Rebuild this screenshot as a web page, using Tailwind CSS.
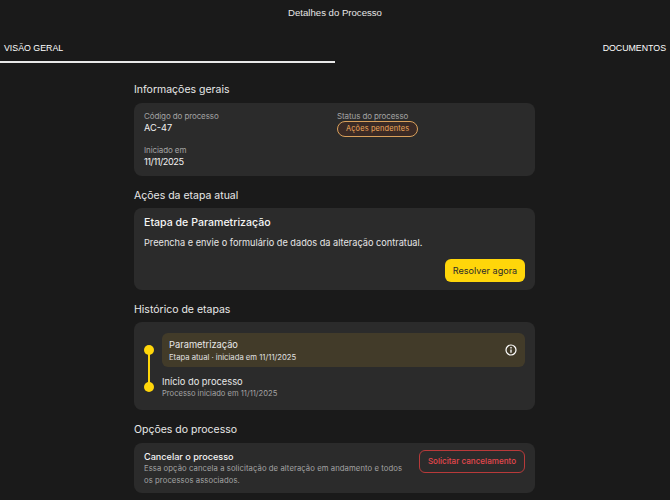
<!DOCTYPE html>
<html><head><meta charset="utf-8"><script src="https://cdn.jsdelivr.net/npm/@tailwindcss/browser@4"></script></head>
<body class="bg-[#1a1a1a] font-['Inter',sans-serif] text-white">
<div class="w-[670px] h-[500px] overflow-hidden">
<div class="h-[25px] pt-[5px] text-center text-[9.6px] leading-[15px] text-[#e6e6e6] font-['Liberation_Sans',sans-serif]">Detalhes do Processo</div>
<div class="flex h-[38px]">
<div class="w-[335px] h-[38px] border-b-2 border-[#e8e8e8] pl-[4px] pt-[16px] text-[8.8px] leading-[14px] font-['Liberation_Sans',sans-serif]">VISÃO GERAL</div>
<div class="w-[335px] pr-[4px] pt-[16px] text-right text-[8.8px] leading-[14px] font-['Liberation_Sans',sans-serif]">DOCUMENTOS</div>
</div>
<main class="w-[401px] ml-[134px]">
<h2 class="mt-[18px] text-[10.5px] leading-[17px] text-[#e8e8e8]">Informações gerais</h2>
<section class="mt-[5px] h-[73px] rounded-lg bg-[#2b2b2b] pl-[10px] pt-[8px] grid grid-cols-[193px_1fr] content-start">
<div><p class="text-[8px] leading-[10px] tracking-[-0.1px] text-[#a3a3a3]">Código do processo</p><p class="text-[9.2px] leading-[13px] text-[#f2f2f2]">AC-47</p></div>
<div class="flex flex-col items-start"><p class="text-[8px] leading-[10px] tracking-[-0.1px] text-[#a3a3a3]">Status do processo</p><span class="flex items-center h-[16px] px-[8px] rounded-full border border-[#d9a05b] bg-[#3a2a25] text-[7.4px] tracking-[0.15px] text-[#f0a95a]">Ações pendentes</span></div>
<div class="mt-[8px]"><p class="text-[8px] leading-[10px] tracking-[-0.1px] text-[#a3a3a3]">Iniciado em</p><p class="text-[9.2px] leading-[13px] tracking-[-0.45px] text-[#f2f2f2]">11/11/2025</p></div>
</section>
<h2 class="mt-[11px] text-[10.5px] leading-[17px] text-[#e8e8e8]">Ações da etapa atual</h2>
<section class="mt-[4px] h-[82px] rounded-lg bg-[#2b2b2b] px-[10px] pt-[7px]">
<h3 class="text-[10.6px] leading-[16px] font-medium text-[#f5f5f5]">Etapa de Parametrização</h3>
<p class="mt-[4px] text-[9.2px] leading-[15px] text-[#e6e6e6]">Preencha e envie o formulário de dados da alteração contratual.</p>
<div class="flex justify-end mt-[9px]"><button class="h-[23px] w-[80px] rounded-md bg-[#ffd60a] text-[#2b2b2b] text-[9.1px]">Resolver agora</button></div>
</section>
<h2 class="mt-[11px] text-[10.5px] leading-[17px] text-[#e8e8e8]">Histórico de etapas</h2>
<section class="relative mt-[4px] h-[88px] rounded-lg bg-[#2b2b2b] pl-[28px] pr-[10px] pt-[11px]">
<span class="absolute left-[10px] top-[23px] size-[10px] rounded-full bg-[#ffd60a]"></span>
<span class="absolute left-[14px] top-[28px] h-[38px] w-[2px] bg-[#ffd60a]"></span>
<span class="absolute left-[10px] top-[60px] size-[10px] rounded-full bg-[#ffd60a]"></span>
<div class="flex items-center justify-between h-[34px] rounded-md bg-[#423b29] px-[7px]">
<div><p class="text-[9.3px] leading-[14px] text-[#e8e8e8]">Parametrização</p><p class="text-[7.7px] leading-[11px] text-[#e0e0e0]">Etapa atual · iniciada em 11/11/2025</p></div>
<svg class="mr-[1px]" width="12" height="12" viewBox="0 0 12 12" fill="none" stroke="#fff"><circle cx="6" cy="6" r="5" stroke-width="1.2"/><path d="M6 5.4V8.8" stroke-width="1.3"/><path d="M6 3.1V4.4" stroke-width="1.3"/></svg>
</div>
<div class="pt-[8px]"><p class="text-[9.3px] leading-[13px] text-[#e8e8e8]">Início do processo</p><p class="text-[7.6px] leading-[12px] text-[#a3a3a3]">Processo iniciado em 11/11/2025</p></div>
</section>
<h2 class="mt-[11px] text-[10.5px] leading-[17px] text-[#e8e8e8]">Opções do processo</h2>
<section class="mt-[5px] h-[50px] rounded-lg bg-[#2b2b2b] pl-[10px] pr-[10px] flex items-center justify-between">
<div class="w-[264px]"><h3 class="text-[9.1px] leading-[13px] font-medium text-[#f5f5f5]">Cancelar o processo</h3><p class="text-[7.7px] leading-[12px] tracking-[0.08px] text-[#a3a3a3]">Essa opção cancela a solicitação de alteração em andamento e todos os processos associados.</p></div>
<button class="self-start mt-[7px] h-[23px] w-[106px] rounded-md border border-[#b83a3a] text-[#e5484d] text-[8.1px] font-medium">Solicitar cancelamento</button>
</section>
</main>
</div>
</body></html>
